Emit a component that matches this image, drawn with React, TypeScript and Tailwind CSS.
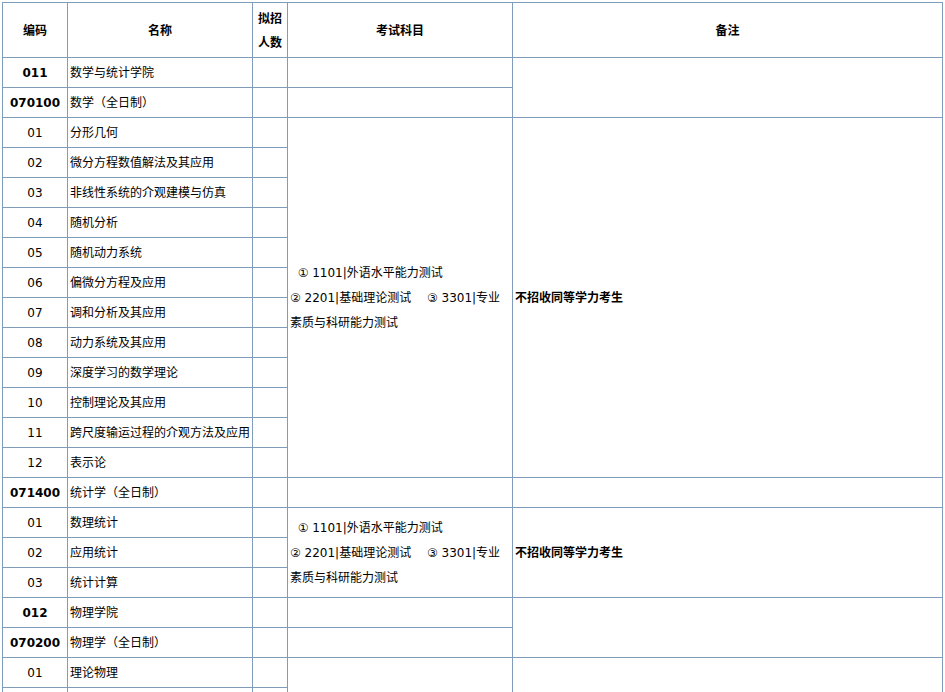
type Row = { code: string; name: string; major?: boolean };

const ROWS: Row[] = [
  { code: "011", name: "数学与统计学院", major: true },
  { code: "070100", name: "数学（全日制）", major: true },
  { code: "01", name: "分形几何" },
  { code: "02", name: "微分方程数值解法及其应用" },
  { code: "03", name: "非线性系统的介观建模与仿真" },
  { code: "04", name: "随机分析" },
  { code: "05", name: "随机动力系统" },
  { code: "06", name: "偏微分方程及应用" },
  { code: "07", name: "调和分析及其应用" },
  { code: "08", name: "动力系统及其应用" },
  { code: "09", name: "深度学习的数学理论" },
  { code: "10", name: "控制理论及其应用" },
  { code: "11", name: "跨尺度输运过程的介观方法及应用" },
  { code: "12", name: "表示论" },
  { code: "071400", name: "统计学（全日制）", major: true },
  { code: "01", name: "数理统计" },
  { code: "02", name: "应用统计" },
  { code: "03", name: "统计计算" },
  { code: "012", name: "物理学院", major: true },
  { code: "070200", name: "物理学（全日制）", major: true },
  { code: "01", name: "理论物理" },
  { code: "", name: "" },
];

// row index -> rowSpan, and whether the cell carries the standard text
const EXAM: Record<number, { span: number; text?: boolean }> = {
  0: { span: 1 }, 1: { span: 1 }, 2: { span: 12, text: true }, 14: { span: 1 },
  15: { span: 3, text: true }, 18: { span: 1 }, 19: { span: 1 }, 20: { span: 2 },
};
const NOTE: Record<number, { span: number; text?: boolean }> = {
  0: { span: 2 }, 2: { span: 12, text: true }, 14: { span: 1 },
  15: { span: 3, text: true }, 18: { span: 2 }, 20: { span: 2 },
};

const cell = "border border-[#7f9db9] px-[2px] pt-px align-middle";

function ExamText() {
  return (
    <div className="leading-[25px]">
      <div className="whitespace-nowrap">{"\u00a0\u00a0① 1101|外语水平能力测试"}</div>
      <div className="whitespace-nowrap">{"② 2201|基础理论测试\u3000 ③ 3301|专业"}</div>
      <div className="whitespace-nowrap">素质与科研能力测试</div>
    </div>
  );
}

export default function App() {
  return (
    <div
      className="h-[692px] overflow-hidden bg-white pl-[2px] pt-[2px] text-[12px] text-black"
      style={{ fontFamily: '"DejaVu Sans", "Noto Sans CJK SC", sans-serif' }}
    >
      <table className="w-[940px] table-fixed border-collapse">
        <colgroup>
          <col className="w-[65px]" />
          <col className="w-[185px]" />
          <col className="w-[35px]" />
          <col className="w-[225px]" />
          <col className="w-[430px]" />
        </colgroup>
        <thead>
          <tr className="h-[55px] font-bold leading-[24px]">
            <th className={`${cell} text-center`}>编码</th>
            <th className={`${cell} text-center`}>名称</th>
            <th className={`${cell} text-center`}>拟招<br />人数</th>
            <th className={`${cell} text-center`}>考试科目</th>
            <th className={`${cell} text-center`}>备注</th>
          </tr>
        </thead>
        <tbody>
          {ROWS.map((r, i) => (
            <tr key={i} className="h-[30px]">
              <td className={`${cell} text-center ${r.major ? "font-bold" : ""}`}>{r.code}</td>
              <td className={`${cell} whitespace-nowrap`}>{r.name}</td>
              <td className={cell} />
              {EXAM[i] && (
                <td rowSpan={EXAM[i].span} className={cell}>
                  {EXAM[i].text && <ExamText />}
                </td>
              )}
              {NOTE[i] && (
                <td rowSpan={NOTE[i].span} className={`${cell} font-bold`}>
                  {NOTE[i].text && "不招收同等学力考生"}
                </td>
              )}
            </tr>
          ))}
        </tbody>
      </table>
    </div>
  );
}
